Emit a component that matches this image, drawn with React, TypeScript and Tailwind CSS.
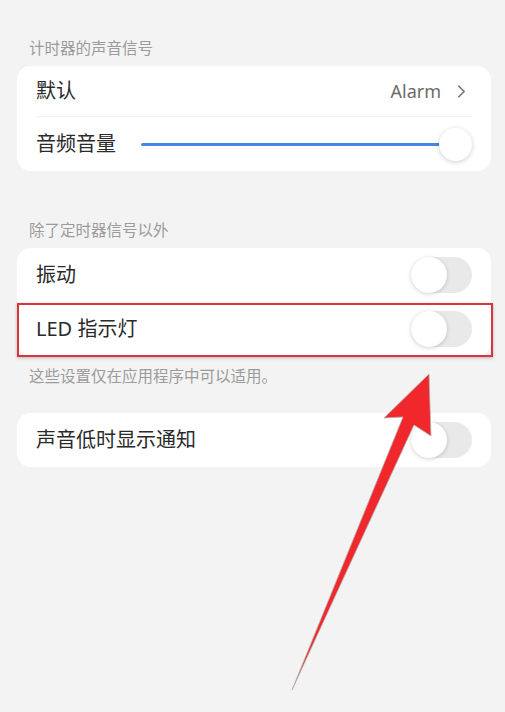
import { FiChevronRight } from "react-icons/fi";

const font = { fontFamily: '"Noto Sans", "Noto Sans CJK SC", sans-serif' };

function Toggle() {
  return (
    <div className="relative h-[36px] w-[61px] shrink-0 rounded-full bg-[#e9e9e9]">
      <div className="absolute left-0 top-0 h-[36px] w-[36px] rounded-full bg-white shadow-[0_1px_4px_rgba(0,0,0,0.18)]" />
    </div>
  );
}

function Header({ children }: { children: React.ReactNode }) {
  return <div className="h-[20px] pl-[12px] text-[15.5px] leading-[20px] text-[#9b9b9b]">{children}</div>;
}

function ToggleRow({ label }: { label: string }) {
  return (
    <div className="flex h-[54px] items-center justify-between pl-[19px] pr-[19px]">
      <span className="text-[20px] text-[#2a2a2a]">{label}</span>
      <Toggle />
    </div>
  );
}

export default function App() {
  return (
    <div className="relative h-[712px] w-[505px] overflow-hidden bg-[#f3f3f3]" style={font}>
      <div className="pl-[17px] pr-[14px] pt-[38px]">
        <Header>计时器的声音信号</Header>
        <div className="mt-[8px] rounded-[14px] bg-white px-[19px]">
          <div className="flex h-[51px] items-center justify-between border-b border-[#f0f0f0]">
            <span className="text-[20px] text-[#2a2a2a]">默认</span>
            <span className="flex items-center gap-[10px] text-[18px] text-[#6b6b6b]">
              Alarm
              <FiChevronRight className="text-[21px] text-[#777]" />
            </span>
          </div>
          <div className="flex h-[54px] items-center">
            <span className="text-[20px] text-[#2a2a2a]">音频音量</span>
            <div className="ml-[25px] flex h-[34px] flex-1 items-center">
              <div className="h-[3px] flex-1 rounded-full bg-[#4a84e4]" />
              <div className="-ml-[2px] h-[33px] w-[33px] shrink-0 rounded-full bg-white shadow-[0_1px_5px_rgba(0,0,0,0.2)]" />
            </div>
          </div>
        </div>

        <div className="mt-[49px]">
          <Header>除了定时器信号以外</Header>
        </div>
        <div className="mt-[8px] rounded-[14px] bg-white">
          <ToggleRow label="振动" />
          <div className="relative">
            <ToggleRow label="LED 指示灯" />
            <div className="absolute -right-[2px] left-0 top-[1px] bottom-[-1px] border-2 border-[#d9363b] shadow-[0_1px_3px_rgba(0,0,0,0.25)]" />
          </div>
        </div>
        <div className="mt-[10px] pl-[12px] text-[15.5px] leading-[20px] text-[#9b9b9b]">这些设置仅在应用程序中可以适用。</div>

        <div className="mt-[27px] rounded-[14px] bg-white">
          <ToggleRow label="声音低时显示通知" />
        </div>
      </div>

      <svg className="pointer-events-none absolute left-0 top-0" width="505" height="712" viewBox="0 0 505 712">
        <polygon
          points="429,374 384,418 403,417 292,690 414,425 431,436"
          fill="#f0272b"
          stroke="#b8b0b0"
          strokeWidth="0.8"
          strokeLinejoin="round"
        />
      </svg>
    </div>
  );
}
